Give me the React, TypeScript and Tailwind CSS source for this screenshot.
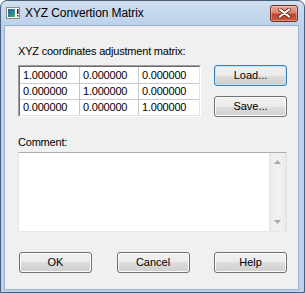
import React from 'react';

const matrix = [
  ['1.000000', '0.000000', '0.000000'],
  ['0.000000', '1.000000', '0.000000'],
  ['0.000000', '0.000000', '1.000000'],
];

const WinButton = ({ label, focused = false }: { label: string; focused?: boolean }) => (
  <button
    className={`h-[21px] w-[73px] rounded-[3px] border bg-[linear-gradient(#f2f2f2_0%,#ebebeb_50%,#dddddd_50%,#cfcfcf_100%)] text-[11px] leading-none text-black ${
      focused
        ? 'border-[#3c7fb1] shadow-[inset_0_0_0_1px_#bfe3f8]'
        : 'border-[#707070] shadow-[inset_0_0_0_1px_#fcfcfc]'
    }`}
  >
    {label}
  </button>
);

const AppIcon = () => (
  <svg width="16" height="16" viewBox="0 0 16 16">
    <defs>
      <linearGradient id="pic" x1="0" y1="0" x2="1" y2="1">
        <stop offset="0" stopColor="#2b5f9e" />
        <stop offset="0.6" stopColor="#2f8a8a" />
        <stop offset="1" stopColor="#58b050" />
      </linearGradient>
    </defs>
    <rect x="1.5" y="2.5" width="13" height="11" fill="#ffffff" stroke="#8a8a8a" />
    <rect x="3" y="4" width="7" height="8" fill="url(#pic)" />
    <rect x="12" y="4" width="1.5" height="5" fill="#222" />
    <rect x="12" y="10" width="1.5" height="1.5" fill="#222" />
  </svg>
);

const CloseButton = () => (
  <div className="flex h-[17px] w-[28px] items-center justify-center rounded-[3px] border border-[#6f2c22] bg-[linear-gradient(#e8a796_0%,#d9826c_45%,#c2432c_55%,#c85a3c_100%)] shadow-[inset_0_0_0_1px_rgba(255,255,255,0.35)]">
    <svg width="13" height="10" viewBox="0 0 13 10">
      <path d="M2 1.5 L11 8.5 M11 1.5 L2 8.5" stroke="#5a2418" strokeWidth="3.6" strokeLinecap="round" />
      <path d="M2 1.5 L11 8.5 M11 1.5 L2 8.5" stroke="#ffffff" strokeWidth="2.2" strokeLinecap="round" />
    </svg>
  </div>
);

const App = () => {
  return (
    <div className="flex h-[293px] w-[305px] flex-col overflow-hidden rounded-t-[7px] border border-[#4a5f7a] bg-[linear-gradient(#cfdff1_0px,#bdd2ea_24px,#bcd2ec_100%)] font-['Liberation_Sans',Arial,sans-serif]">
      {/* Title bar */}
      <div className="flex h-[24px] shrink-0 items-center pl-[4px] pr-[6px]">
        <AppIcon />
        <span className="ml-[4px] text-[12px] tracking-[-0.1px] text-black">XYZ Convertion Matrix</span>
        <div className="ml-auto">
          <CloseButton />
        </div>
      </div>

      {/* Client area */}
      <div className="mb-[2px] ml-[3px] mr-[5px] flex flex-1 flex-col border border-[#9db1ca] bg-[#f0f0f0] pl-[13px] pr-[11px] pt-[19px] text-[11px] leading-[13px] text-black">
        <div className="tracking-[-0.2px]">XYZ coordinates adjustment matrix:</div>

        <div className="mt-[7px] flex items-start">
          {/* Matrix grid */}
          <div className="border border-b-white border-l-[#a0a0a0] border-r-white border-t-[#a0a0a0]">
            <div className="border border-b-[#e3e3e3] border-l-[#696969] border-r-[#e3e3e3] border-t-[#696969]">
              <div className="grid grid-cols-[59px_58px_60px] grid-rows-[16px_15px_15px] gap-px bg-[#c8c8c8]">
                {matrix.flat().map((v, i) => (
                  <div key={i} className="flex items-center bg-white pl-[3px] tracking-[-0.2px]">
                    {v}
                  </div>
                ))}
              </div>
            </div>
          </div>

          <div className="ml-auto flex flex-col gap-[10px]">
            <WinButton label="Load..." focused />
            <WinButton label="Save..." />
          </div>
        </div>

        <div className="mt-[19px] tracking-[-0.2px]">Comment:</div>

        {/* Comment box */}
        <div className="mt-[3px] flex h-[80px] border border-b-[#e3e9ef] border-l-[#e2e3ea] border-r-[#dbdfe6] border-t-[#abadb3] bg-white">
          <div className="flex-1" />
          <div className="flex w-[17px] flex-col items-center justify-between bg-[linear-gradient(90deg,#e5e5e5,#f0f0f0_30%,#f0f0f0_70%,#e8e8e8)] py-[7px]">
            <svg width="7" height="4" viewBox="0 0 7 4">
              <path d="M0 4 L3.5 0 L7 4 Z" fill="#a9a9a9" />
            </svg>
            <svg width="7" height="4" viewBox="0 0 7 4">
              <path d="M0 0 L7 0 L3.5 4 Z" fill="#a9a9a9" />
            </svg>
          </div>
        </div>

        {/* Dialog buttons */}
        <div className="mt-[20px] flex justify-between pl-[1px]">
          <WinButton label="OK" />
          <WinButton label="Cancel" />
          <WinButton label="Help" />
        </div>
      </div>
    </div>
  );
};

export default App;
